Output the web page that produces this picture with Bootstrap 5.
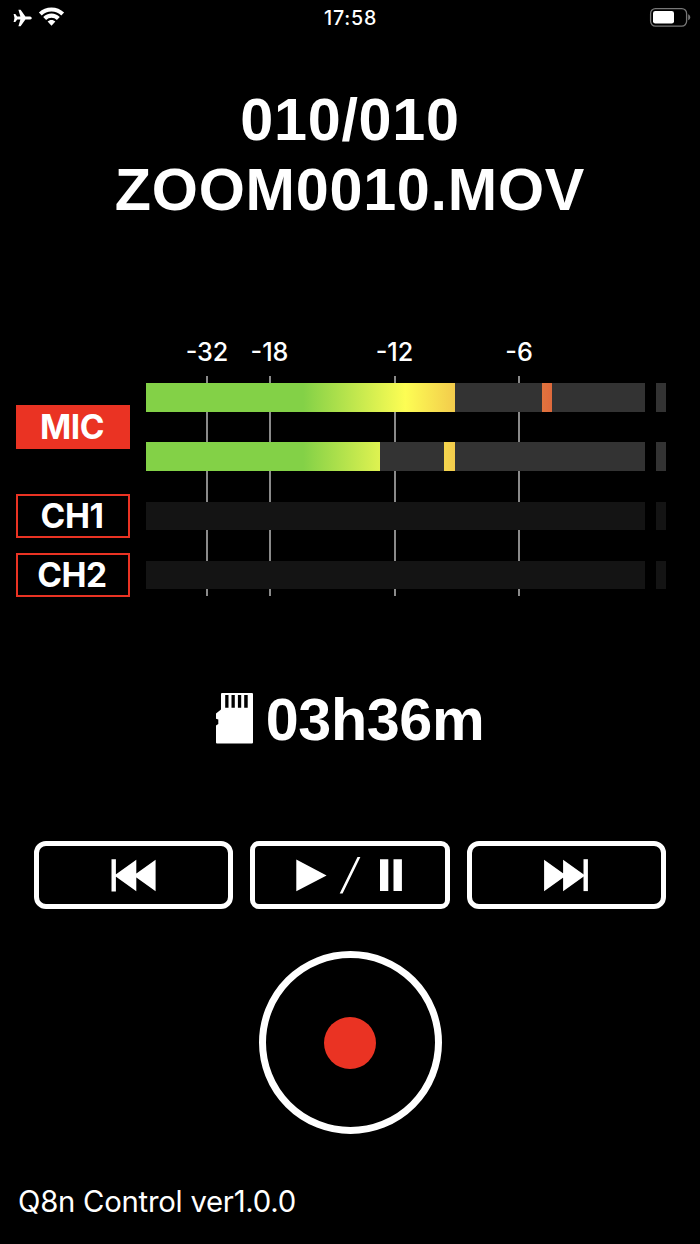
<!DOCTYPE html>
<html lang="en">
<head>
<meta charset="utf-8">
<meta name="viewport" content="width=device-width, initial-scale=1">
<title>Q8n Control</title>
<link href="https://cdn.jsdelivr.net/npm/bootstrap@5.3.0/dist/css/bootstrap.min.css" rel="stylesheet">
<style>
  body { background: #000; color: #fff; font-family: "Inter", sans-serif; }
  .screen { width: 700px; height: 1244px; overflow: hidden; }
  svg { display: block; }

  .status-bar { height: 36px; padding: 0 9px 0 12px; }
  .status-side { width: 80px; }
  .status-time { font-size: 19.6px; font-weight: 500; line-height: 36px; letter-spacing: .8px; padding-right: 2px; }

  .helv { font-family: "Liberation Sans", sans-serif; font-weight: 700; font-size: 59.3px; line-height: 70px; }
  .file-title { margin-top: 49px; letter-spacing: .75px; }

  .meters { margin-top: 111px; padding: 0 34px 0 16px; }
  .channel-list { width: 114px; padding-top: 69px; }
  .channel { height: 44px; border: 2px solid #ea3323; border-radius: 0; background: #000; color: #fff;
             font-size: 33.5px; font-weight: 650; line-height: 40px; padding: 0 2px 0 0; letter-spacing: -.5px; }
  .channel.armed { background: #ea3323; margin-bottom: 45px; }
  .channel + .channel:last-child { margin-top: 15px; }

  .meter-area { width: 520px; margin-left: 16px; }
  .scale { display: grid; grid-template-columns: 62px 63px 31px 125px 124px; padding-left: 30px; }
  .scale > :nth-child(3) { grid-column: 4; }
  .scale-labels { font-size: 25.2px; font-weight: 550; line-height: 32px; height: 40px; }
  .tick-lines { inset: 0; }
  .tick-lines i { width: 2px; height: 220px; background: #8a8a8a; justify-self: center; }
  .tracks { height: 220px; padding-top: 7px; }
  .track { height: 28px; gap: 11px; margin-bottom: 31px; }
  .track.live { height: 29px; margin-bottom: 30px; }
  .track.live + .track:not(.live) { margin-top: 31px; }
  .bar-level { width: 499px; background: #141414; }
  .clip-led { width: 10px; background: #141414; }
  .live .bar-level, .live .clip-led { background: #333; }
  .level, .peak { background-image: linear-gradient(90deg, #83d147 31.5%, #fdfd54 52%, #de693c 81.5%); background-size: 499px 100%; background-repeat: no-repeat; }

  .remaining { margin-top: 88px; height: 70px; gap: 13px; padding-left: 0; letter-spacing: -.4px; }
  .remaining svg { margin-bottom: 4px; }

  .transport { margin-top: 86px; padding: 0 34px; gap: 17px; }
  .transport .key { width: 199px; height: 68px; border: 5px solid #fff; border-radius: 12px; background: #000; padding: 0; }
  .transport .key-play { border-radius: 9px; width: 200px; }

  .record { margin-top: 42px; width: 183px; height: 183px; border: 7px solid #fff; background: #000; }
  .record span { width: 52px; height: 52px; background: #ea3323; }

  .version { margin-top: 48px; padding-left: 18px; font-size: 29.3px; line-height: 40px; font-weight: 400; letter-spacing: -.25px; }
</style>
</head>
<body>
<main class="screen d-flex flex-column">
  <header class="status-bar d-flex justify-content-between align-items-center">
    <div class="status-side">
      <svg width="56" height="36" viewBox="12 0 56 36" fill="#fff">
        <path d="M31.800 18c0-.9-1.200-1.600-2.600-1.600h-3.800L20.600 9.800h-2.200l2 6.600h-3.200l-1.900-2.400h-1.700l.9 4-.9 4h1.700l1.900-2.400h3.200l-2 6.600h2.200l4.800-6.600h3.800c1.400 0 2.600-.7 2.600-1.600z"/>
        <path d="M51.500 7.400c4.900 0 9.300 1.900 12.600 5.100l-2.800 2.900a14 14 0 0 0-19.600 0l-2.800-2.900a18 18 0 0 1 12.600-5.100z"/>
        <path d="M51.500 13.600c3.200 0 6.100 1.300 8.300 3.400l-2.900 3a7.600 7.600 0 0 0-10.800 0l-2.900-3c2.200-2.100 5.100-3.400 8.300-3.400z"/>
        <path d="M51.500 19.900c1.500 0 2.900.6 3.900 1.700l-3.900 4.100-3.900-4.100c1-1.100 2.400-1.700 3.900-1.700z"/>
      </svg>
    </div>
    <div class="status-time">17:58</div>
    <div class="status-side d-flex justify-content-end">
      <svg width="42" height="36" viewBox="649 0 42 36">
        <rect x="650.600" y="8.600" width="36" height="17.500" rx="4.800" fill="none" stroke="#777" stroke-width="1.300"/>
        <rect x="653" y="11" width="21" height="12.600" rx="2.300" fill="#fff"/>
        <path d="M688.200 14.200c1.300.5 2 1.700 2 3s-.7 2.500-2 3z" fill="#777"/>
      </svg>
    </div>
  </header>

  <h1 class="file-title helv text-center mb-0">010/010<br>ZOOM0010.MOV</h1>

  <section class="meters d-flex">
    <div class="channel-list d-flex flex-column">
      <button class="channel armed">MIC</button>
      <button class="channel">CH1</button>
      <button class="channel">CH2</button>
    </div>
    <div class="meter-area">
      <div class="scale scale-labels text-center">
        <span>-32</span><span>-18</span><span>-12</span><span>-6</span>
      </div>
      <div class="tracks position-relative">
        <div class="scale tick-lines position-absolute"><i></i><i></i><i></i><i></i></div>
        <div class="track live d-flex position-relative">
          <div class="bar-level d-flex">
            <div class="level" style="width:309px"></div>
            <div class="peak" style="width:10px;margin-left:87px;background-position:-396px 0"></div>
          </div>
          <div class="clip-led"></div>
        </div>
        <div class="track live d-flex position-relative">
          <div class="bar-level d-flex">
            <div class="level" style="width:234px"></div>
            <div class="peak" style="width:11px;margin-left:64px;background-position:-298px 0"></div>
          </div>
          <div class="clip-led"></div>
        </div>
        <div class="track d-flex position-relative"><div class="bar-level"></div><div class="clip-led"></div></div>
        <div class="track d-flex position-relative mb-0"><div class="bar-level"></div><div class="clip-led"></div></div>
      </div>
    </div>
  </section>

  <section class="remaining helv d-flex justify-content-center align-items-center">
    <svg width="37" height="51" viewBox="0 0 37 51">
      <path fill="#fff" d="M6 0H36q1 0 1 1V49.500q0 1-1 1H1q-1 0-1-1V32.500L2.300 31V26.500L0 25.800V20.500L5 16.500V1q0-1 1-1z"/>
      <path fill="#000" d="M9.200 2h3.300v12.700H9.200zM15.500 2h3.300v12.700h-3.300zM21.900 2h3.300v12.700h-3.300zM28.200 2h3.500v12.700h-3.500z"/>
    </svg>
    <span>03h36m</span>
  </section>

  <section class="transport d-flex justify-content-between">
    <button class="key d-flex align-items-center justify-content-center" aria-label="Previous">
      <svg width="189" height="58" viewBox="39 846 189 58" fill="#fff"><path d="M111.500 859.300h4.400v32.300h-4.400zM136.300 859.800v31.400l-22-15.700zM155.600 859.800v31.400l-22-15.700z"/></svg>
    </button>
    <button class="key key-play d-flex align-items-center justify-content-center" aria-label="Play / Pause">
      <svg width="190" height="58" viewBox="255 846 190 58" fill="#fff"><path d="M296.300 859.500v31.700l30.300-15.800zM339.700 893.500h2.900L360.400 857h-2.900zM380 859.200h8.300v31.900H380zM393.500 859.200h8.400v31.900h-8.400z"/></svg>
    </button>
    <button class="key d-flex align-items-center justify-content-center" aria-label="Next">
      <svg width="189" height="58" viewBox="472 846 189 58" fill="#fff"><path d="M544.100 859.800v31.400l22-15.700zM563.100 859.800v31.400l22-15.700z"/><path d="M583.500 859.200h4.400v31.900h-4.400z"/></svg>
    </button>
  </section>

  <button class="record rounded-circle mx-auto d-flex align-items-center justify-content-center flex-shrink-0 p-0" aria-label="Record"><span class="rounded-circle"></span></button>

  <footer class="version">Q8n Control ver1.0.0</footer>
</main>
<script src="https://cdn.jsdelivr.net/npm/bootstrap@5.3.0/dist/js/bootstrap.bundle.min.js"></script>
</body>
</html>
